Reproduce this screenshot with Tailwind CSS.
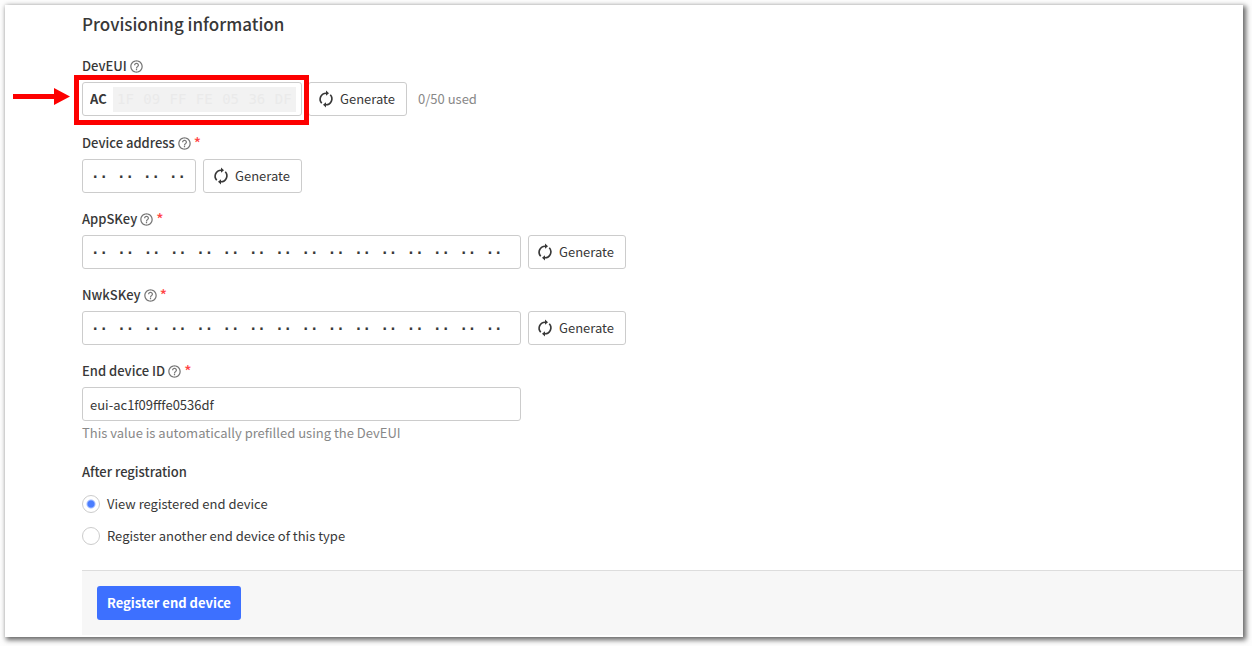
<!DOCTYPE html>
<html lang="en">
<head>
<meta charset="utf-8">
<meta name="viewport" content="width=device-width, initial-scale=1">
<title>Register end device</title>
<script src="https://cdn.jsdelivr.net/npm/@tailwindcss/browser@4"></script>
</head>
<body class="min-h-screen bg-[#fdfdfd] pt-[5px] pr-[9px] pb-[9px] pl-[5px] font-['Noto_Sans_CJK_SC',sans-serif] text-[13px] leading-[18px] text-[#383838]">
<svg class="hidden" aria-hidden="true">
  <symbol id="help" viewBox="0 0 24 24"><path fill="currentColor" d="M11 18h2v-2h-2v2zm1-16C6.48 2 2 6.48 2 12s4.480 10 10 10 10-4.480 10-10S17.520 2 12 2zm0 18c-4.410 0-8-3.590-8-8s3.590-8 8-8 8 3.590 8 8-3.590 8-8 8zm0-14c-2.210 0-4 1.790-4 4h2c0-1.100.9-2 2-2s2 .9 2 2c0 2-3 1.750-3 5h2c0-2.250 3-2.500 3-5 0-2.210-1.790-4-4-4z"/></symbol>
  <symbol id="renew" viewBox="0 0 24 24"><path fill="none" stroke="currentColor" stroke-width="2.200" d="M6.300 17.700A8 8 0 0 1 12.500 4.300M17.700 6.300A8 8 0 0 1 11.500 19.700"/><path fill="currentColor" d="M12 .8v7l4-3.500zM12 23.200v-7l-4 3.500z"/></symbol>
</svg>
<main class="bg-white pt-[8px] pb-[2px] pl-[77px] shadow-[2px_2px_5px_1px_#00000099]">
  <form>
    <h1 class="mb-[23px] text-[17px] leading-[21px] font-medium">Provisioning information</h1>

    <div class="mb-[18px]">
      <label for="eui" class="mb-[7px] flex items-center font-medium">DevEUI<svg class="ml-[2px] size-[15px] text-[#777]"><use href="#help"/></svg></label>
      <div class="flex items-center">
        <div class="relative mr-[6px] h-[34px] w-[220px] rounded-[3px] border border-[#ccc]" role="group" aria-label="DevEUI bytes">
          <div class="absolute -top-[8px] -right-[8px] -bottom-[10px] -left-[9px] border-[5px] border-[#fd0000]"></div>
          <svg class="absolute top-[5px] -left-[70px] h-[17px] w-[57px]" viewBox="0 0 57 17" aria-hidden="true"><path fill="#fd0000" d="M0 6h41V0l16 8.500L41 17v-6H0z"/></svg>
          <div class="relative flex h-full items-center pr-[5px] pl-[7px]">
            <input id="eui" class="w-[23px] font-bold outline-none" value="AC" maxlength="2">
            <div class="h-[25px] min-w-0 flex-1 bg-[#f2f2f2] pl-1">
              <div class="grid h-full w-[184px] grid-cols-7 items-center font-['DejaVu_Sans_Mono',monospace] text-[14px] text-[#eaeaea]" id="euiRest"></div>
            </div>
          </div>
        </div>
        <button type="button" class="flex h-[34px] w-[99px] items-center rounded-[3px] border border-[#ccc] bg-white pl-[8px]"><svg class="mr-[5px] size-[18px]"><use href="#renew"/></svg>Generate</button>
        <span class="ml-[11px] text-[#888]">0/50 used</span>
      </div>
    </div>

    <div class="mb-[17px]">
      <label for="addr0" class="mb-[7px] flex items-center font-medium">Device address<svg class="ml-[2px] size-[15px] text-[#777]"><use href="#help"/></svg><span class="ml-[2px] text-[15px] text-[#f44]">*</span></label>
      <div class="flex gap-[7px]">
        <div class="grid h-[34px] w-[114px] grid-cols-4 items-center rounded-[3px] border border-[#ccc] pl-[8px]" role="group" aria-label="Device address bytes" data-bytes="4" data-name="addr"></div>
        <button type="button" class="flex h-[34px] w-[99px] items-center rounded-[3px] border border-[#ccc] bg-white pl-[8px]"><svg class="mr-[5px] size-[18px]"><use href="#renew"/></svg>Generate</button>
      </div>
    </div>

    <div class="mb-[17px]">
      <label for="app0" class="mb-[7px] flex items-center font-medium">AppSKey<svg class="ml-[2px] size-[15px] text-[#777]"><use href="#help"/></svg><span class="ml-[2px] text-[15px] text-[#f44]">*</span></label>
      <div class="flex gap-[7px]">
        <div class="grid h-[34px] w-[439px] grid-cols-16 items-center rounded-[3px] border border-[#ccc] px-[8px]" role="group" aria-label="AppSKey bytes" data-bytes="16" data-name="app"></div>
        <button type="button" class="flex h-[34px] w-[98px] items-center rounded-[3px] border border-[#ccc] bg-white pl-[7px]"><svg class="mr-[5px] size-[18px]"><use href="#renew"/></svg>Generate</button>
      </div>
    </div>

    <div class="mb-[17px]">
      <label for="nwk0" class="mb-[7px] flex items-center font-medium">NwkSKey<svg class="ml-[2px] size-[15px] text-[#777]"><use href="#help"/></svg><span class="ml-[2px] text-[15px] text-[#f44]">*</span></label>
      <div class="flex gap-[7px]">
        <div class="grid h-[34px] w-[439px] grid-cols-16 items-center rounded-[3px] border border-[#ccc] px-[8px]" role="group" aria-label="NwkSKey bytes" data-bytes="16" data-name="nwk"></div>
        <button type="button" class="flex h-[34px] w-[98px] items-center rounded-[3px] border border-[#ccc] bg-white pl-[7px]"><svg class="mr-[5px] size-[18px]"><use href="#renew"/></svg>Generate</button>
      </div>
    </div>

    <div class="mb-[21px]">
      <label for="devid" class="mb-[7px] flex items-center font-medium">End device ID<svg class="ml-[2px] size-[15px] text-[#777]"><use href="#help"/></svg><span class="ml-[2px] text-[15px] text-[#f44]">*</span></label>
      <input id="devid" class="block h-[34px] w-[439px] rounded-[3px] border border-[#ccc] px-[7px] outline-none" value="eui-ac1f09fffe0536df">
      <p class="mt-[3px] text-[#888]">This value is automatically prefilled using the DevEUI</p>
    </div>

    <fieldset>
      <legend class="mb-[14px] font-medium">After registration</legend>
      <label class="mb-[14px] flex items-center gap-[7px]"><input type="radio" name="after" checked class="size-[18px] appearance-none rounded-full border border-[#ccc] checked:bg-[radial-gradient(circle,#4a7dff_3px,transparent_5px)]">View registered end device</label>
      <label class="flex items-center gap-[7px]"><input type="radio" name="after" class="size-[18px] appearance-none rounded-full border border-[#ccc] checked:bg-[radial-gradient(circle,#4a7dff_3px,transparent_5px)]">Register another end device of this type</label>
    </fieldset>

    <div class="mt-[25px] border-t border-[#ddd] bg-[#f7f7f7] p-[15px]">
      <button type="submit" class="block h-[34px] rounded-[3px] bg-[#3d70ff] px-[10px] font-bold text-white">Register end device</button>
    </div>
  </form>
</main>
<script>
  const addByte = (box, value, id, cls) => {
    const el = document.createElement('input');
    el.value = value;
    el.maxLength = 2;
    el.className = cls;
    if (id) el.id = id;
    el.setAttribute('aria-label', 'Byte');
    box.append(el);
  };
  document.querySelectorAll('[data-bytes]').forEach(box => {
    for (let i = 0; i < +box.dataset.bytes; i++)
      addByte(box, '··', box.dataset.name + i, "w-full min-w-0 pt-[2px] font-['DejaVu_Sans_Mono',monospace] text-[14px] font-bold outline-none");
  });
  ['1F', '09', 'FF', 'FE', '05', '36', 'DF'].forEach(v =>
    addByte(document.getElementById('euiRest'), v, '', 'w-full min-w-0 outline-none'));
</script>
</body>
</html>
